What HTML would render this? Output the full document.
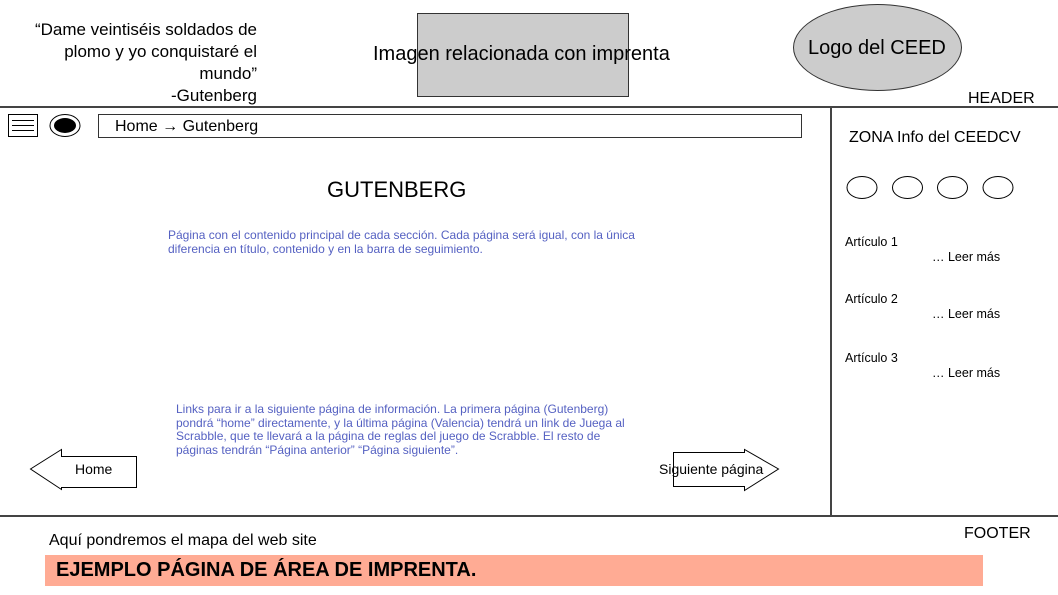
<!DOCTYPE html>
<html><head><meta charset="utf-8"><style>
*{margin:0;padding:0;box-sizing:border-box}
body{width:1058px;height:595px;position:relative;background:#fff;font-family:"Liberation Sans",sans-serif;color:#000;overflow:hidden}
.a{position:absolute;white-space:nowrap}
.blue{color:#5561c2;font-size:12px;line-height:13.5px}
</style></head><body>
<div class="a" style="right:801px;top:19px;text-align:right;font-size:17px;line-height:22px">“Dame veintiséis soldados de<br>plomo y yo conquistaré el<br>mundo”<br>-Gutenberg</div>
<div class="a" style="left:417px;top:13px;width:212px;height:84px;background:#cccccc;border:1px solid #333"></div>
<div class="a" style="left:373px;top:42px;font-size:20px;line-height:24px">Imagen relacionada con imprenta</div>
<div class="a" style="left:793px;top:4px;width:169px;height:87px;background:#cccccc;border:1px solid #333;border-radius:50%"></div>
<div class="a" style="left:808px;top:36px;font-size:20px;line-height:24px">Logo del CEED</div>
<div class="a" style="left:968px;top:90px;font-size:16px;line-height:18px">HEADER</div>
<div class="a" style="left:0;top:106px;width:1058px;height:2px;background:#444"></div>
<div class="a" style="left:830px;top:107px;width:2px;height:410px;background:#444"></div>
<div class="a" style="left:0;top:515px;width:1058px;height:2px;background:#444"></div>
<svg class="a" style="left:0;top:108px" width="100" height="34">
<rect x="8.5" y="6.5" width="29" height="22" fill="none" stroke="#000"/>
<line x1="12" y1="12.5" x2="34" y2="12.5" stroke="#000"/>
<line x1="12" y1="17.5" x2="34" y2="17.5" stroke="#000"/>
<line x1="12" y1="22.5" x2="34" y2="22.5" stroke="#000"/>
<ellipse cx="65" cy="17.5" rx="15" ry="11" fill="#fff" stroke="#000"/>
<ellipse cx="65" cy="17.5" rx="11" ry="7.5" fill="#000"/>
</svg>
<div class="a" style="left:98px;top:114px;width:704px;height:24px;border:1px solid #333"></div>
<div class="a" style="left:115px;top:117px;font-size:16px;line-height:19px">Home → Gutenberg</div>
<div class="a" style="left:327px;top:177px;font-size:22px;line-height:26px">GUTENBERG</div>
<div class="a blue" style="left:168px;top:229px">Página con el contenido principal de cada sección. Cada página será igual, con la única<br>diferencia en título, contenido y en la barra de seguimiento.</div>
<div class="a blue" style="left:176px;top:403px">Links para ir a la siguiente página de información. La primera página (Gutenberg)<br>pondrá “home” directamente, y la última página (Valencia) tendrá un link de Juega al<br>Scrabble, que te llevará a la página de reglas del juego de Scrabble. El resto de<br>páginas tendrán “Página anterior” “Página siguiente”.</div>
<svg class="a" style="left:0;top:440px" width="800" height="60">
<polygon points="30.5,29 61.5,9.5 61.5,16.5 136.5,16.5 136.5,47.5 61.5,47.5 61.5,49.5" fill="#fff" stroke="#000"/>
<polygon points="673.5,12.5 744.5,12.5 744.5,9.5 778.5,29 744.5,50.5 744.5,46.5 673.5,46.5" fill="#fff" stroke="#000"/>
</svg>
<div class="a" style="left:75px;top:461px;font-size:14px;line-height:16px">Home</div>
<div class="a" style="left:659px;top:461px;font-size:14px;line-height:16px">Siguiente página</div>
<div class="a" style="left:849px;top:129px;font-size:16px;line-height:18px">ZONA Info del CEEDCV</div>
<svg class="a" style="left:840px;top:172px" width="218" height="32">
<ellipse cx="22" cy="15.5" rx="15" ry="11" fill="none" stroke="#000"/>
<ellipse cx="67.5" cy="15.5" rx="15" ry="11" fill="none" stroke="#000"/>
<ellipse cx="112.5" cy="15.5" rx="15" ry="11" fill="none" stroke="#000"/>
<ellipse cx="158" cy="15.5" rx="15" ry="11" fill="none" stroke="#000"/>
</svg>
<div class="a" style="left:845px;top:235px;font-size:12.5px;line-height:15px">Artículo 1</div>
<div class="a" style="left:932px;top:250px;font-size:12.5px;line-height:15px">… Leer más</div>
<div class="a" style="left:845px;top:292px;font-size:12.5px;line-height:15px">Artículo 2</div>
<div class="a" style="left:932px;top:307px;font-size:12.5px;line-height:15px">… Leer más</div>
<div class="a" style="left:845px;top:351px;font-size:12.5px;line-height:15px">Artículo 3</div>
<div class="a" style="left:932px;top:366px;font-size:12.5px;line-height:15px">… Leer más</div>
<div class="a" style="left:964px;top:525px;font-size:16px;line-height:18px">FOOTER</div>
<div class="a" style="left:49px;top:532px;font-size:16px;line-height:18px">Aquí pondremos el mapa del web site</div>
<div class="a" style="left:45px;top:555px;width:938px;height:31px;background:#ffab94"></div>
<div class="a" style="left:56px;top:559px;font-size:20px;line-height:23px;font-weight:bold">EJEMPLO PÁGINA DE ÁREA DE IMPRENTA.</div>
</body></html>
